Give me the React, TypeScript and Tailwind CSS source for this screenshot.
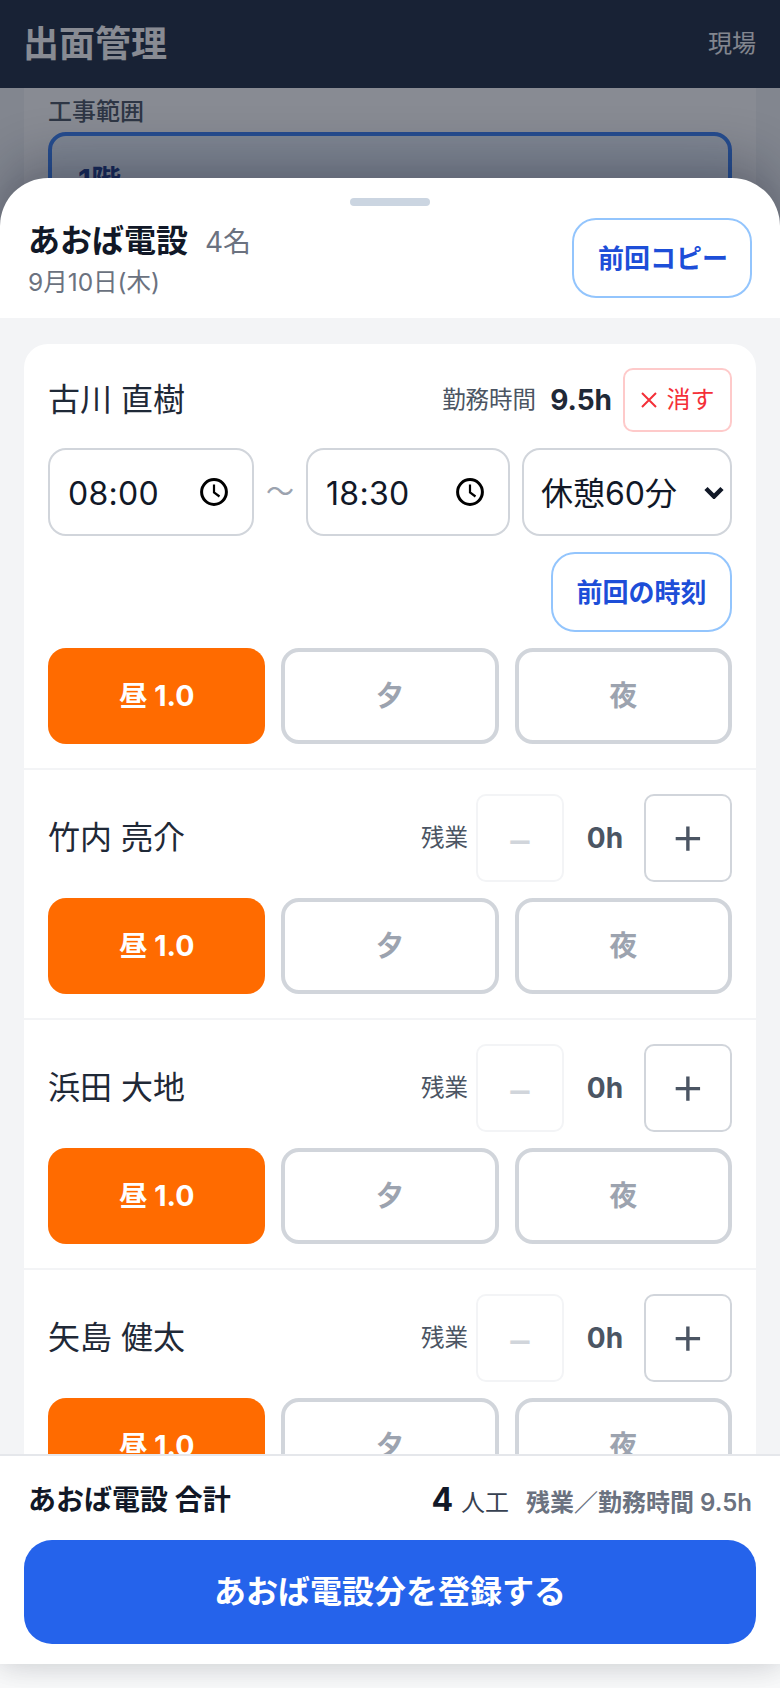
const font = { fontFamily: '"Inter", "Noto Sans CJK JP", sans-serif' };

function ClockIcon() {
  return (
    <svg width="28" height="28" viewBox="0 0 28 28" fill="none" stroke="#000" strokeWidth="3">
      <circle cx="14" cy="14" r="12.4" />
      <path d="M14 6.5v8l5.5 4" strokeWidth="2.2" />
    </svg>
  );
}

function TimeBox({ value, width }: { value: string; width: string }) {
  return (
    <div className={`${width} h-[88px] shrink-0 flex items-center justify-between pl-[18px] pr-[24px] rounded-[18px] border-2 border-[#d1d5db] bg-white text-[32px] tracking-[0.3px] text-[#111827]`}>
      <span className="pt-[3px]">{value}</span>
      <ClockIcon />
    </div>
  );
}

function ShiftButtons() {
  return (
    <div className="grid grid-cols-3 gap-4">
      <button className="h-24 rounded-[18px] bg-[#ff6b00] text-[28.5px] font-bold text-white">昼 1.0</button>
      <button className="h-24 rounded-[18px] border-4 border-[#d1d5db] bg-white text-[28px] font-bold text-[#9ca3af]">夕</button>
      <button className="h-24 rounded-[18px] border-4 border-[#d1d5db] bg-white text-[28px] font-bold text-[#9ca3af]">夜</button>
    </div>
  );
}

function OvertimeRow({ name }: { name: string }) {
  return (
    <div className="border-t-2 border-[#f3f4f6] px-6 pt-6 pb-6">
      <div className="flex items-center justify-between h-[88px]">
        <span className="text-[32px] text-[#1f2937]">{name}</span>
        <div className="flex items-center">
          <span className="mr-2 text-[23.5px] text-[#4b5563]">残業</span>
          <button className="flex h-[88px] w-[88px] items-center justify-center rounded-[10px] border-2 border-[#f3f4f6] text-[42px] text-[#d1d5db]">−</button>
          <span className="w-[80px] pl-[2px] text-center text-[28px] font-bold text-[#4b5563]">0h</span>
          <button className="flex h-[88px] w-[88px] items-center justify-center rounded-[10px] border-2 border-[#d1d5db] pb-[7px] text-[54px] font-light leading-none text-[#4b5563]">+</button>
        </div>
      </div>
      <div className="mt-4">
        <ShiftButtons />
      </div>
    </div>
  );
}

export default function App() {
  return (
    <div className="relative h-[1688px] w-[780px] overflow-hidden bg-[#f9fafb]" style={font}>
      {/* page behind the sheet */}
      <header className="flex h-[88px] items-center justify-between bg-[#1f2d42] pl-[23px] pr-6 text-white">
        <h1 className="text-[36px] font-bold">出面管理</h1>
        <span className="text-[24px] text-[#f3f4f6]">現場</span>
      </header>
      <div className="h-[1500px] bg-[#f3f4f6] px-6">
        <div className="h-full bg-white px-6 pt-[6px]">
          <div className="text-[24px] font-medium text-[#4b5563]">工事範囲</div>
          <div className="mt-[2px] h-[200px] rounded-[18px] border-4 border-[#3b82f6] bg-[#eff6ff] pl-[26px] pt-[22px] text-[30px] font-bold text-[#1e3a8a]">1階</div>
        </div>
      </div>

      {/* dim layer */}
      <div className="absolute inset-x-0 top-0 bottom-6 bg-[#111827]/50" />

      {/* bottom sheet */}
      <div className="absolute inset-x-0 top-[178px] bottom-6 flex flex-col rounded-t-[48px] bg-white shadow-[0_-20px_50px_rgba(15,23,42,0.28),0_8px_24px_rgba(0,0,0,0.08)]">
        <div className="h-[142px] shrink-0 border-b-2 border-[#f3f4f6] px-7">
          <div className="mx-auto mt-5 h-2 w-20 rounded-full bg-[#cbd5e1]" />
          <div className="mt-3 flex items-start justify-between">
            <div>
              <div className="flex items-baseline gap-[17px] leading-[46px]">
                <span className="text-[32px] font-bold text-[#111827]">あおば電設</span>
                <span className="text-[28px] text-[#6b7280]">4名</span>
              </div>
              <div className="text-[24.5px] leading-[34px] text-[#6b7280]">9月10日(木)</div>
            </div>
            <button className="h-20 w-[180px] rounded-[24px] border-2 border-[#93c5fd] bg-white pl-[2px] text-[26px] font-bold text-[#1d4ed8]">前回コピー</button>
          </div>
        </div>

        <div className="min-h-0 flex-1 overflow-hidden bg-[#f3f4f6] px-6 pt-6">
          <div className="rounded-[24px] bg-white">
            {/* first worker, with working hours */}
            <div className="px-6 pt-6 pb-6">
              <div className="flex h-16 items-center justify-between">
                <span className="text-[32px] text-[#1f2937]">古川 直樹</span>
                <div className="flex items-center">
                  <span className="text-[23.5px] text-[#4b5563]">勤務時間</span>
                  <span className="ml-[14px] mr-[11px] text-[28px] font-bold text-[#1f2937]">9.5h</span>
                  <button className="flex h-16 w-[109px] items-center justify-center gap-[10px] rounded-[10px] border-2 border-[#fecaca] text-[24px] text-[#f43038]">
                    <svg width="16" height="16" viewBox="0 0 16 16" fill="none" stroke="currentColor" strokeWidth="2">
                      <path d="M1 1l14 14M15 1L1 15" />
                    </svg>
                    消す
                  </button>
                </div>
              </div>
              <div className="mt-4 flex items-center">
                <TimeBox value="08:00" width="w-[206px]" />
                <span className="w-[52px] text-center text-[28px] text-[#9ca3af]">〜</span>
                <TimeBox value="18:30" width="w-[204px]" />
                <div className="relative ml-[12px] w-[210px]">
                  <select className="h-[88px] w-full appearance-none rounded-[18px] border-2 border-[#d1d5db] bg-white pl-[17px] pt-[3px] text-[32px] text-[#111827]">
                    <option>休憩60分</option>
                  </select>
                  <svg className="pointer-events-none absolute right-[8px] top-[38px]" width="20" height="13" viewBox="0 0 20 13" fill="none" stroke="#111827" strokeWidth="4.5">
                    <path d="M2 2.5l8 8 8-8" />
                  </svg>
                </div>
              </div>
              <div className="mt-4 flex justify-end">
                <button className="h-20 w-[181px] rounded-[24px] border-2 border-[#93c5fd] bg-white text-[26px] font-bold text-[#1d4ed8]">前回の時刻</button>
              </div>
              <div className="mt-4">
                <ShiftButtons />
              </div>
            </div>
            <OvertimeRow name="竹内 亮介" />
            <OvertimeRow name="浜田 大地" />
            <OvertimeRow name="矢島 健太" />
          </div>
        </div>

        <div className="h-[210px] shrink-0 border-t-2 border-[#e5e7eb] bg-white px-6 pt-6">
          <div className="flex h-[40px] items-center justify-between px-1">
            <span className="text-[28px] font-bold text-[#111827]">あおば電設 合計</span>
            <div className="flex items-baseline">
              <span className="text-[32px] font-bold text-[#111827]">4</span>
              <span className="ml-2 text-[24px] text-[#374151]">人工</span>
              <span className="ml-[17px] text-[24px] font-semibold text-[#6b7280]">残業／勤務時間 9.5h</span>
            </div>
          </div>
          <button className="mt-5 h-[104px] w-full rounded-[28px] bg-[#2563eb] text-[32px] font-semibold text-white">あおば電設分を登録する</button>
        </div>
      </div>
    </div>
  );
}
